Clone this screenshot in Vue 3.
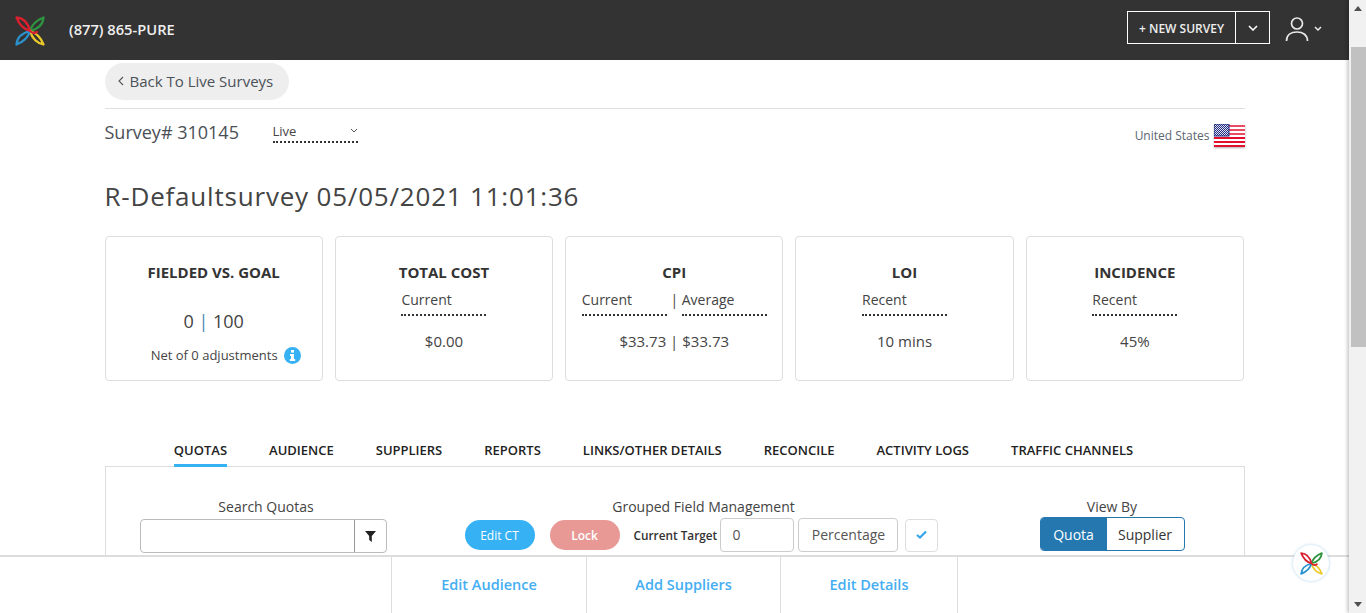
<template>
  <div class="page">
    <!-- shared logo mark -->
    <svg class="defs" width="0" height="0" aria-hidden="true">
      <symbol id="mark" viewBox="0 0 30 30">
        <g fill="none" stroke-width="2.300" stroke-linejoin="round" stroke-linecap="round">
          <path d="M15 15C17 8 22 4 28.500 1.500C28 8 23 13 15 15Z" stroke="#2f9440" />
          <path d="M15 15C22 17 26 22 28.500 28.500C22 27 17 22 15 15Z" stroke="#ecc92a" />
          <path d="M15 15C13 22 8 26 1.500 28.500C2 22 7 17 15 15Z" stroke="#2a93cf" />
          <path d="M15 15C8 13 4 8 1.500 1.500C8 2 13 7 15 15C17 17 20 17.500 22 16" stroke="#d8202f" />
        </g>
      </symbol>
    </svg>

    <div class="viewport">
      <header class="topbar">
        <svg class="logo" width="30" height="30"><use href="#mark" /></svg>
        <span class="phone">(877) 865-PURE</span>
        <div class="new-survey">
          <span class="new-label">+ NEW SURVEY</span>
          <span class="new-caret">
            <svg width="10" height="6" viewBox="0 0 10 6"><path d="M1 1l4 4 4-4" fill="none" stroke="#fff" stroke-width="1.600" /></svg>
          </span>
        </div>
        <svg class="user" width="24" height="26" viewBox="0 0 24 26" fill="none" stroke="#e8e8e8" stroke-width="1.700">
          <circle cx="12" cy="7.500" r="5.500" />
          <path d="M1.500 25c0-6 4.500-9 10.500-9s10.500 3 10.500 9" />
        </svg>
        <svg class="user-caret" width="8" height="5" viewBox="0 0 8 5"><path d="M1 1l3 3 3-3" fill="none" stroke="#e8e8e8" stroke-width="1.500" /></svg>
      </header>

      <main class="content">
        <div class="container">
          <button type="button" class="back-btn">
            <svg width="6" height="10" viewBox="0 0 6 10"><path d="M5 1L1 5l4 4" fill="none" stroke="#555" stroke-width="1.100" /></svg>
            Back To Live Surveys
          </button>

          <div class="survey-row">
            <span class="survey-no">Survey# 310145</span>
            <div class="status">
              <span>Live</span>
              <svg width="8" height="5" viewBox="0 0 8 5"><path d="M1 1l3 3 3-3" fill="none" stroke="#555" stroke-width="1" /></svg>
            </div>
            <div class="country">
              <span>United States</span>
              <svg class="flag" width="31" height="23" viewBox="0 0 31 23">
                <defs>
                  <pattern id="stars" width="2" height="2" patternUnits="userSpaceOnUse">
                    <rect width="2" height="2" fill="#1f2a80" />
                    <rect width="1" height="1" fill="#e4e6f4" />
                    <rect x="1" y="1" width="1" height="1" fill="#e4e6f4" />
                  </pattern>
                </defs>
                <rect width="31" height="23" fill="#fff" />
                <rect v-for="y in stripes" :key="y" x="0" :y="y" width="31" height="2" fill="#e0102e" />
                <rect x="15" y="1" width="16" height="11" fill="#fff" fill-opacity="0.25" />
                <rect width="15" height="12" fill="url(#stars)" stroke="#1f2a80" />
              </svg>
            </div>
          </div>

          <h1 class="title">R-Defaultsurvey 05/05/2021 11:01:36</h1>

          <section class="cards">
            <div class="card">
              <h3>FIELDED VS. GOAL</h3>
              <div class="goal">0 <span class="pipe">|</span> 100</div>
              <div class="net">
                Net of 0 adjustments
                <svg width="17" height="17" viewBox="0 0 17 17">
                  <circle cx="8.500" cy="8.500" r="8.500" fill="#35b1f4" />
                  <rect x="7" y="3" width="3" height="2.600" fill="#fff" />
                  <path d="M6 7h4v5h1.200v2H5.800v-2H7V9H6z" fill="#fff" />
                </svg>
              </div>
            </div>
            <div v-for="card in cards" :key="card.title" class="card">
              <h3>{{ card.title }}</h3>
              <div class="labels">
                <template v-for="(label, i) in card.labels" :key="label">
                  <span v-if="i > 0" class="sep">|</span>
                  <span class="dotted">{{ label }}</span>
                </template>
              </div>
              <div class="value">{{ card.value }}</div>
            </div>
          </section>

          <nav class="tabs">
            <a v-for="(tab, i) in tabs" :key="tab" :class="{ active: i === 0 }">{{ tab }}</a>
          </nav>

          <section class="panel">
            <div class="group search">
              <label>Search Quotas</label>
              <div class="search-box">
                <input type="text" />
                <span class="filter">
                  <svg width="11" height="11" viewBox="0 0 11 11"><path d="M0 0h11L6.800 5v6L4.200 9V5z" fill="#222" /></svg>
                </span>
              </div>
            </div>

            <div class="group grouped">
              <label>Grouped Field Management</label>
              <div class="grouped-row">
                <button type="button" class="pill blue">Edit CT</button>
                <button type="button" class="pill red">Lock</button>
                <span class="target-label">Current Target</span>
                <span class="field target">0</span>
                <span class="field percent">Percentage</span>
                <span class="field check">
                  <svg width="11" height="9" viewBox="0 0 11 9"><path d="M1 5l3 2.500L10 1.500" fill="none" stroke="#35a4ea" stroke-width="2.200" /></svg>
                </span>
              </div>
            </div>

            <div class="group view-by">
              <label>View By</label>
              <div class="toggle">
                <span class="on">Quota</span>
                <span>Supplier</span>
              </div>
            </div>
          </section>
        </div>
      </main>

      <footer class="actions">
        <a v-for="action in actions" :key="action.label" :style="{ width: action.width + 'px' }">{{ action.label }}</a>
      </footer>

      <div class="float-logo">
        <svg width="23" height="23"><use href="#mark" /></svg>
      </div>
    </div>

    <div class="scrollbar">
      <span class="arrow up"></span>
      <span class="thumb"></span>
      <span class="arrow down"></span>
    </div>
  </div>
</template>

<script setup>
const stripes = [1, 5, 9, 13, 17, 21];

const tabs = [
  "Quotas",
  "Audience",
  "Suppliers",
  "Reports",
  "Links/Other Details",
  "Reconcile",
  "Activity Logs",
  "Traffic Channels",
];

const cards = [
  { title: "TOTAL COST", labels: ["Current"], value: "$0.00" },
  { title: "CPI", labels: ["Current", "Average"], value: "$33.73 | $33.73" },
  { title: "LOI", labels: ["Recent"], value: "10 mins" },
  { title: "INCIDENCE", labels: ["Recent"], value: "45%" },
];

const actions = [
  { label: "Edit Audience", width: 195 },
  { label: "Add Suppliers", width: 194 },
  { label: "Edit Details", width: 178 },
];
</script>

<style>
html,
body {
  margin: 0;
  overflow: hidden;
}
</style>

<style scoped>
.page {
  display: flex;
  height: 613px;
  overflow: hidden;
  background: #fff;
  font-family: "Open Sans", "Liberation Sans", sans-serif;
  color: #444;
}
.defs {
  position: absolute;
}
.viewport {
  position: relative;
  flex: 1;
  min-width: 0;
  display: flex;
  flex-direction: column;
}

.topbar {
  flex: none;
  height: 60px;
  display: flex;
  align-items: center;
  background: #333;
  padding: 0 27px 0 15px;
  box-sizing: border-box;
}
.logo {
  margin-top: 1px;
}
.phone {
  margin-left: 24px;
  flex: 1;
  margin-top: -3px;
  color: #eee;
  font-size: 14.700px;
  font-weight: 600;
}
.new-survey {
  display: flex;
  height: 33px;
  box-sizing: border-box;
  margin-top: -5px;
  border: 1px solid #fff;
  color: #eee;
  font-size: 12px;
  font-weight: 600;
}
.new-label {
  width: 108px;
  padding-top: 1px;
  box-sizing: border-box;
  display: flex;
  align-items: center;
  justify-content: center;
  border-right: 1px solid #fff;
}
.new-caret {
  width: 33px;
  display: flex;
  align-items: center;
  justify-content: center;
}
.user {
  margin-left: 15px;
  margin-top: -3px;
}
.user-caret {
  margin-left: 5px;
  margin-top: -4px;
}

.content {
  flex: 1;
  min-height: 0;
  overflow: hidden;
}
.container {
  width: 1140px;
  margin: 0 auto;
  padding-top: 3px;
}
.back-btn {
  display: flex;
  align-items: center;
  gap: 6px;
  width: 184px;
  height: 37px;
  padding: 0 0 2px 13px;
  border: 0;
  border-radius: 19px;
  background: #eee;
  color: #4a5158;
  font-family: inherit;
  font-size: 15px;
}
.survey-row {
  display: flex;
  align-items: center;
  height: 49px;
  margin-top: 8px;
  border-top: 1px solid #e0e0e0;
  padding-bottom: 2px;
  box-sizing: border-box;
}
.survey-no {
  width: 168px;
  font-size: 18px;
  color: #4a4f55;
}
.status {
  width: 85px;
  height: 22px;
  box-sizing: border-box;
  display: flex;
  align-items: center;
  justify-content: space-between;
  padding-bottom: 1px;
  border-bottom: 2px dotted #333;
  font-size: 13px;
  color: #444;
}
.country {
  margin-left: auto;
  display: flex;
  align-items: center;
  gap: 4px;
  padding-top: 7px;
  font-size: 12px;
  color: #5a6670;
}
.flag {
  box-shadow: 0 1px 2px rgba(0, 0, 0, 0.3);
}
.title {
  margin: 21px 0 22px;
  font-size: 26px;
  line-height: 36px;
  font-weight: 400;
  color: #444;
  letter-spacing: 0.8px;
}

.cards {
  display: grid;
  grid-template-columns: repeat(5, 1fr);
  gap: 12px;
  width: 1139.500px;
}
.card {
  height: 145px;
  box-sizing: border-box;
  padding-top: 25px;
  border: 1px solid #ddd;
  border-radius: 4px;
  text-align: center;
}
.card h3 {
  margin: 0;
  font-size: 15px;
  line-height: 20px;
  font-weight: 700;
  color: #333;
}
.goal {
  margin-top: 27px;
  font-size: 18px;
  line-height: 24px;
}
.pipe {
  color: #4a86b8;
}
.net {
  margin-top: 13px;
  margin-left: 24px;
  display: flex;
  align-items: center;
  justify-content: center;
  gap: 6px;
  font-size: 13px;
  line-height: 18px;
  color: #444;
}
.labels {
  display: flex;
  justify-content: center;
  margin-top: 8px;
  font-size: 14px;
  line-height: 19px;
}
.dotted {
  width: 85px;
  height: 24px;
  text-align: left;
  border-bottom: 2px dotted #333;
}
.sep {
  width: 15px;
  text-align: center;
}
.value {
  margin-top: 15px;
  font-size: 15px;
  line-height: 20px;
}

.tabs {
  display: flex;
  justify-content: center;
  gap: 42px;
  margin-top: 57px;
  padding-right: 42px;
}
.tabs a {
  height: 29px;
  box-sizing: border-box;
  padding-top: 4px;
  font-size: 13px;
  line-height: 17px;
  font-weight: 600;
  text-transform: uppercase;
  color: #222;
}
.tabs a.active {
  border-bottom: 3px solid #35b1f4;
}

.panel {
  display: flex;
  height: 200px;
  box-sizing: border-box;
  padding: 30px 0 0 34px;
  border: 1px solid #ddd;
  margin-top: -1px;
}
.group label {
  display: block;
  text-align: center;
  font-size: 14px;
  line-height: 19px;
  color: #444;
}
.search {
  width: 247px;
}
.search label {
  padding-left: 6px;
}
.search-box {
  display: flex;
  height: 34px;
  margin-top: 3px;
  box-sizing: border-box;
  border: 1px solid #bbb;
  border-radius: 4px;
}
.search-box input {
  flex: 1;
  min-width: 0;
  border: 0;
  background: none;
  outline: none;
}
.filter {
  width: 31px;
  display: flex;
  align-items: center;
  justify-content: center;
  border-left: 1px solid #999;
}
.grouped {
  width: 473px;
  margin-left: 78px;
}
.grouped label {
  padding-left: 5px;
}
.grouped-row {
  display: flex;
  align-items: center;
  margin-top: 2px;
}
.pill {
  width: 70px;
  height: 30px;
  padding: 0;
  border: 0;
  border-radius: 15px;
  color: #fff;
  font-family: inherit;
  font-size: 12px;
}
.pill.blue {
  background: #35b1f4;
}
.pill.red {
  margin-left: 15px;
  background: #e89996;
  font-weight: 600;
}
.target-label {
  margin-left: 14px;
  width: 86px;
  font-size: 11.800px;
  font-weight: 600;
  color: #333;
  white-space: nowrap;
}
.field {
  height: 34px;
  box-sizing: border-box;
  display: flex;
  align-items: center;
  border: 1px solid #ccc;
  border-radius: 4px;
  padding-bottom: 1px;
  font-size: 14px;
  color: #555;
}
.target {
  width: 74px;
  padding-left: 12px;
}
.percent {
  width: 100px;
  margin-left: 4px;
  padding-left: 2px;
  justify-content: center;
}
.check {
  width: 33px;
  height: 33px;
  margin-left: 7px;
  justify-content: center;
  border-color: #ddd;
}
.view-by {
  margin-left: 102px;
}
.toggle {
  display: flex;
  width: 145px;
  height: 34px;
  margin-top: 1px;
  box-sizing: border-box;
  border: 1px solid #2577b0;
  border-radius: 4px;
  overflow: hidden;
  font-size: 14px;
  color: #333;
}
.toggle span {
  flex: 1;
  display: flex;
  align-items: center;
  justify-content: center;
}
.toggle .on {
  flex: none;
  width: 66px;
  background: #2577b0;
  color: #fff;
}

.actions {
  flex: none;
  display: flex;
  height: 58px;
  box-sizing: border-box;
  padding: 0 0 0 391px;
  border-top: 2px solid #ddd;
  background: #fff;
}
.actions a {
  display: flex;
  align-items: center;
  justify-content: center;
  box-sizing: border-box;
  padding-bottom: 2px;
  border-left: 1px solid #ddd;
  font-size: 14.500px;
  font-weight: 600;
  color: #45aef2;
}
.actions a:last-child {
  border-right: 1px solid #ddd;
}
.float-logo {
  position: absolute;
  left: 1293px;
  top: 545px;
  width: 36px;
  height: 36px;
  display: flex;
  align-items: center;
  justify-content: center;
  background: #fff;
  border-radius: 50%;
  box-shadow: 0 0 3px rgba(90, 170, 220, 0.5);
}

.scrollbar {
  position: relative;
  flex: none;
  width: 17px;
  background: #f1f1f1;
  box-shadow: -2px 0 3px rgba(0, 0, 0, 0.2);
}
.thumb {
  position: absolute;
  left: 2px;
  right: 0;
  top: 47px;
  height: 300px;
  background: #c1c1c1;
}
.arrow {
  position: absolute;
  left: 5px;
  width: 0;
  height: 0;
  border-left: 4px solid transparent;
  border-right: 4px solid transparent;
}
.arrow.up {
  top: 6px;
  border-bottom: 5px solid #505050;
}
.arrow.down {
  bottom: 6px;
  border-top: 5px solid #505050;
}
</style>
